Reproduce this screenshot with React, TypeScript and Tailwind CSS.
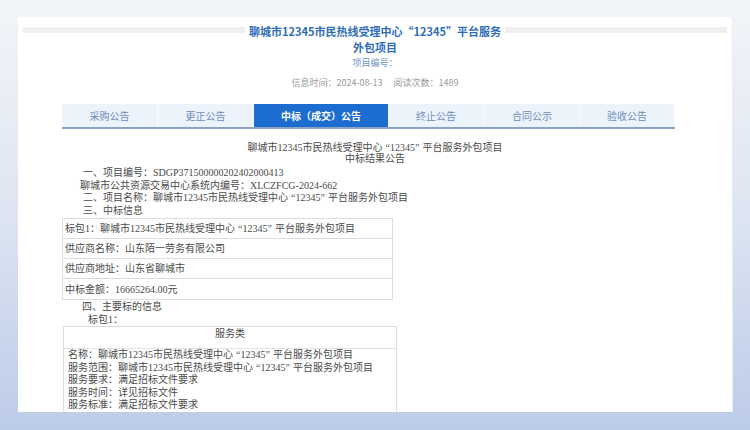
const tabs = [
  { label: "采购公告", w: "w-[96px]" },
  { label: "更正公告", w: "w-[96px]" },
  { label: "中标（成交）公告", w: "w-[134px]", active: true },
  { label: "终止公告", w: "w-[97px]" },
  { label: "合同公示", w: "w-[95px]" },
  { label: "验收公告", w: "w-[95px]" }
];

const Q = () => <span className="mx-[3px]">“12345”</span>;

const ProjectName = () => (
  <>
    聊城市12345市民热线受理中心
    <Q />
    平台服务外包项目
  </>
);

export default function App() {
  return (
    <div className="h-[430px] w-[750px] overflow-hidden bg-linear-to-b from-[#f3f5f9] via-[#dde5f2] to-[#bccbe8] pl-[18px] pt-[17px]">
      <div className="h-[395px] w-[714px] overflow-hidden bg-white shadow-[1px_0_0_#e6ecf5]">
        {/* header */}
        <div className="font-['Noto_Sans_CJK_SC',sans-serif]">
          <div className="flex items-start px-[5px] pt-[6px]">
            <div className="mt-[4px] h-[6px] flex-1 bg-[#efefef]" />
            <h1 className="px-[4px] text-center text-[11px] font-bold leading-[16px] text-[#2f6db8]">
              聊城市12345市民热线受理中心“12345”平台服务
              <br />
              外包项目
            </h1>
            <div className="mt-[4px] h-[6px] flex-1 bg-[#efefef]" />
          </div>
          <p className="mt-[2px] text-center text-[9px] leading-[12px] text-[#7196c6]">项目编号：</p>
          <p className="mt-[8px] text-center text-[9px] leading-[12px] text-[#9a9a9a]">
            信息时间：2024-08-13　 阅读次数：1489
          </p>

          <div className="ml-[44px] mt-[15px] flex h-[25px] w-[613px] border-b-2 border-[#8aa3c4] bg-[#edf3fb]">
            {tabs.map((t) => (
              <div
                key={t.label}
                className={
                  t.active
                    ? `${t.w} flex items-center justify-center bg-[#1d6dd0] text-[10px] font-bold text-white`
                    : `${t.w} flex items-center justify-center border-r border-[#f7faff] text-[10px] text-[#6a8dbd]`
                }
              >
                {t.label}
              </div>
            ))}
          </div>
        </div>

        {/* body */}
        <div className="font-['Liberation_Serif','Noto_Sans_CJK_SC',serif] text-[10px] text-[#4a4a4a]">
          <div className="mt-[13px] text-center leading-[11px]">
            <p>
              <ProjectName />
            </p>
            <p>中标结果公告</p>
          </div>

          <div className="mt-[3px] pl-[62px] leading-[12.5px]">
            <p className="pl-[3px]">一、项目编号：SDGP371500000202402000413</p>
            <p>聊城市公共资源交易中心系统内编号：XLCZFCG-2024-662</p>
            <p className="pl-[3px]">
              二、项目名称：
              <ProjectName />
            </p>
            <p className="pl-[3px]">三、中标信息</p>
          </div>

          <div className="ml-[44px] mt-[1px] w-[331px] border border-[#dcdcdc]">
            <div className="flex h-[20px] items-center border-b border-[#dcdcdc] px-[2px]">
              <span>
                标包1：
                <ProjectName />
              </span>
            </div>
            <div className="flex h-[20px] items-center border-b border-[#dcdcdc] px-[2px]">供应商名称：山东陌一劳务有限公司</div>
            <div className="flex h-[20px] items-center border-b border-[#dcdcdc] px-[2px]">供应商地址：山东省聊城市</div>
            <div className="flex h-[20px] items-center px-[2px]">中标金额：16665264.00元</div>
          </div>

          <div className="pl-[64px] leading-[12.5px]">
            <p className="mt-[1px]">四、主要标的信息</p>
            <p className="pl-[6px]">标包1：</p>
          </div>

          <div className="ml-[45px] w-[334px] border border-[#dcdcdc]">
            <div className="h-[22px] border-b border-[#e4e4e4] pt-[1px] text-center leading-[12.5px]">服务类</div>
            <div className="px-[4px] leading-[12.5px]">
              <p>
                名称：
                <ProjectName />
              </p>
              <p>
                服务范围：
                <ProjectName />
              </p>
              <p>服务要求：满足招标文件要求</p>
              <p>服务时间：详见招标文件</p>
              <p>服务标准：满足招标文件要求</p>
              <p>&nbsp;</p>
            </div>
          </div>
        </div>
      </div>
    </div>
  );
}
